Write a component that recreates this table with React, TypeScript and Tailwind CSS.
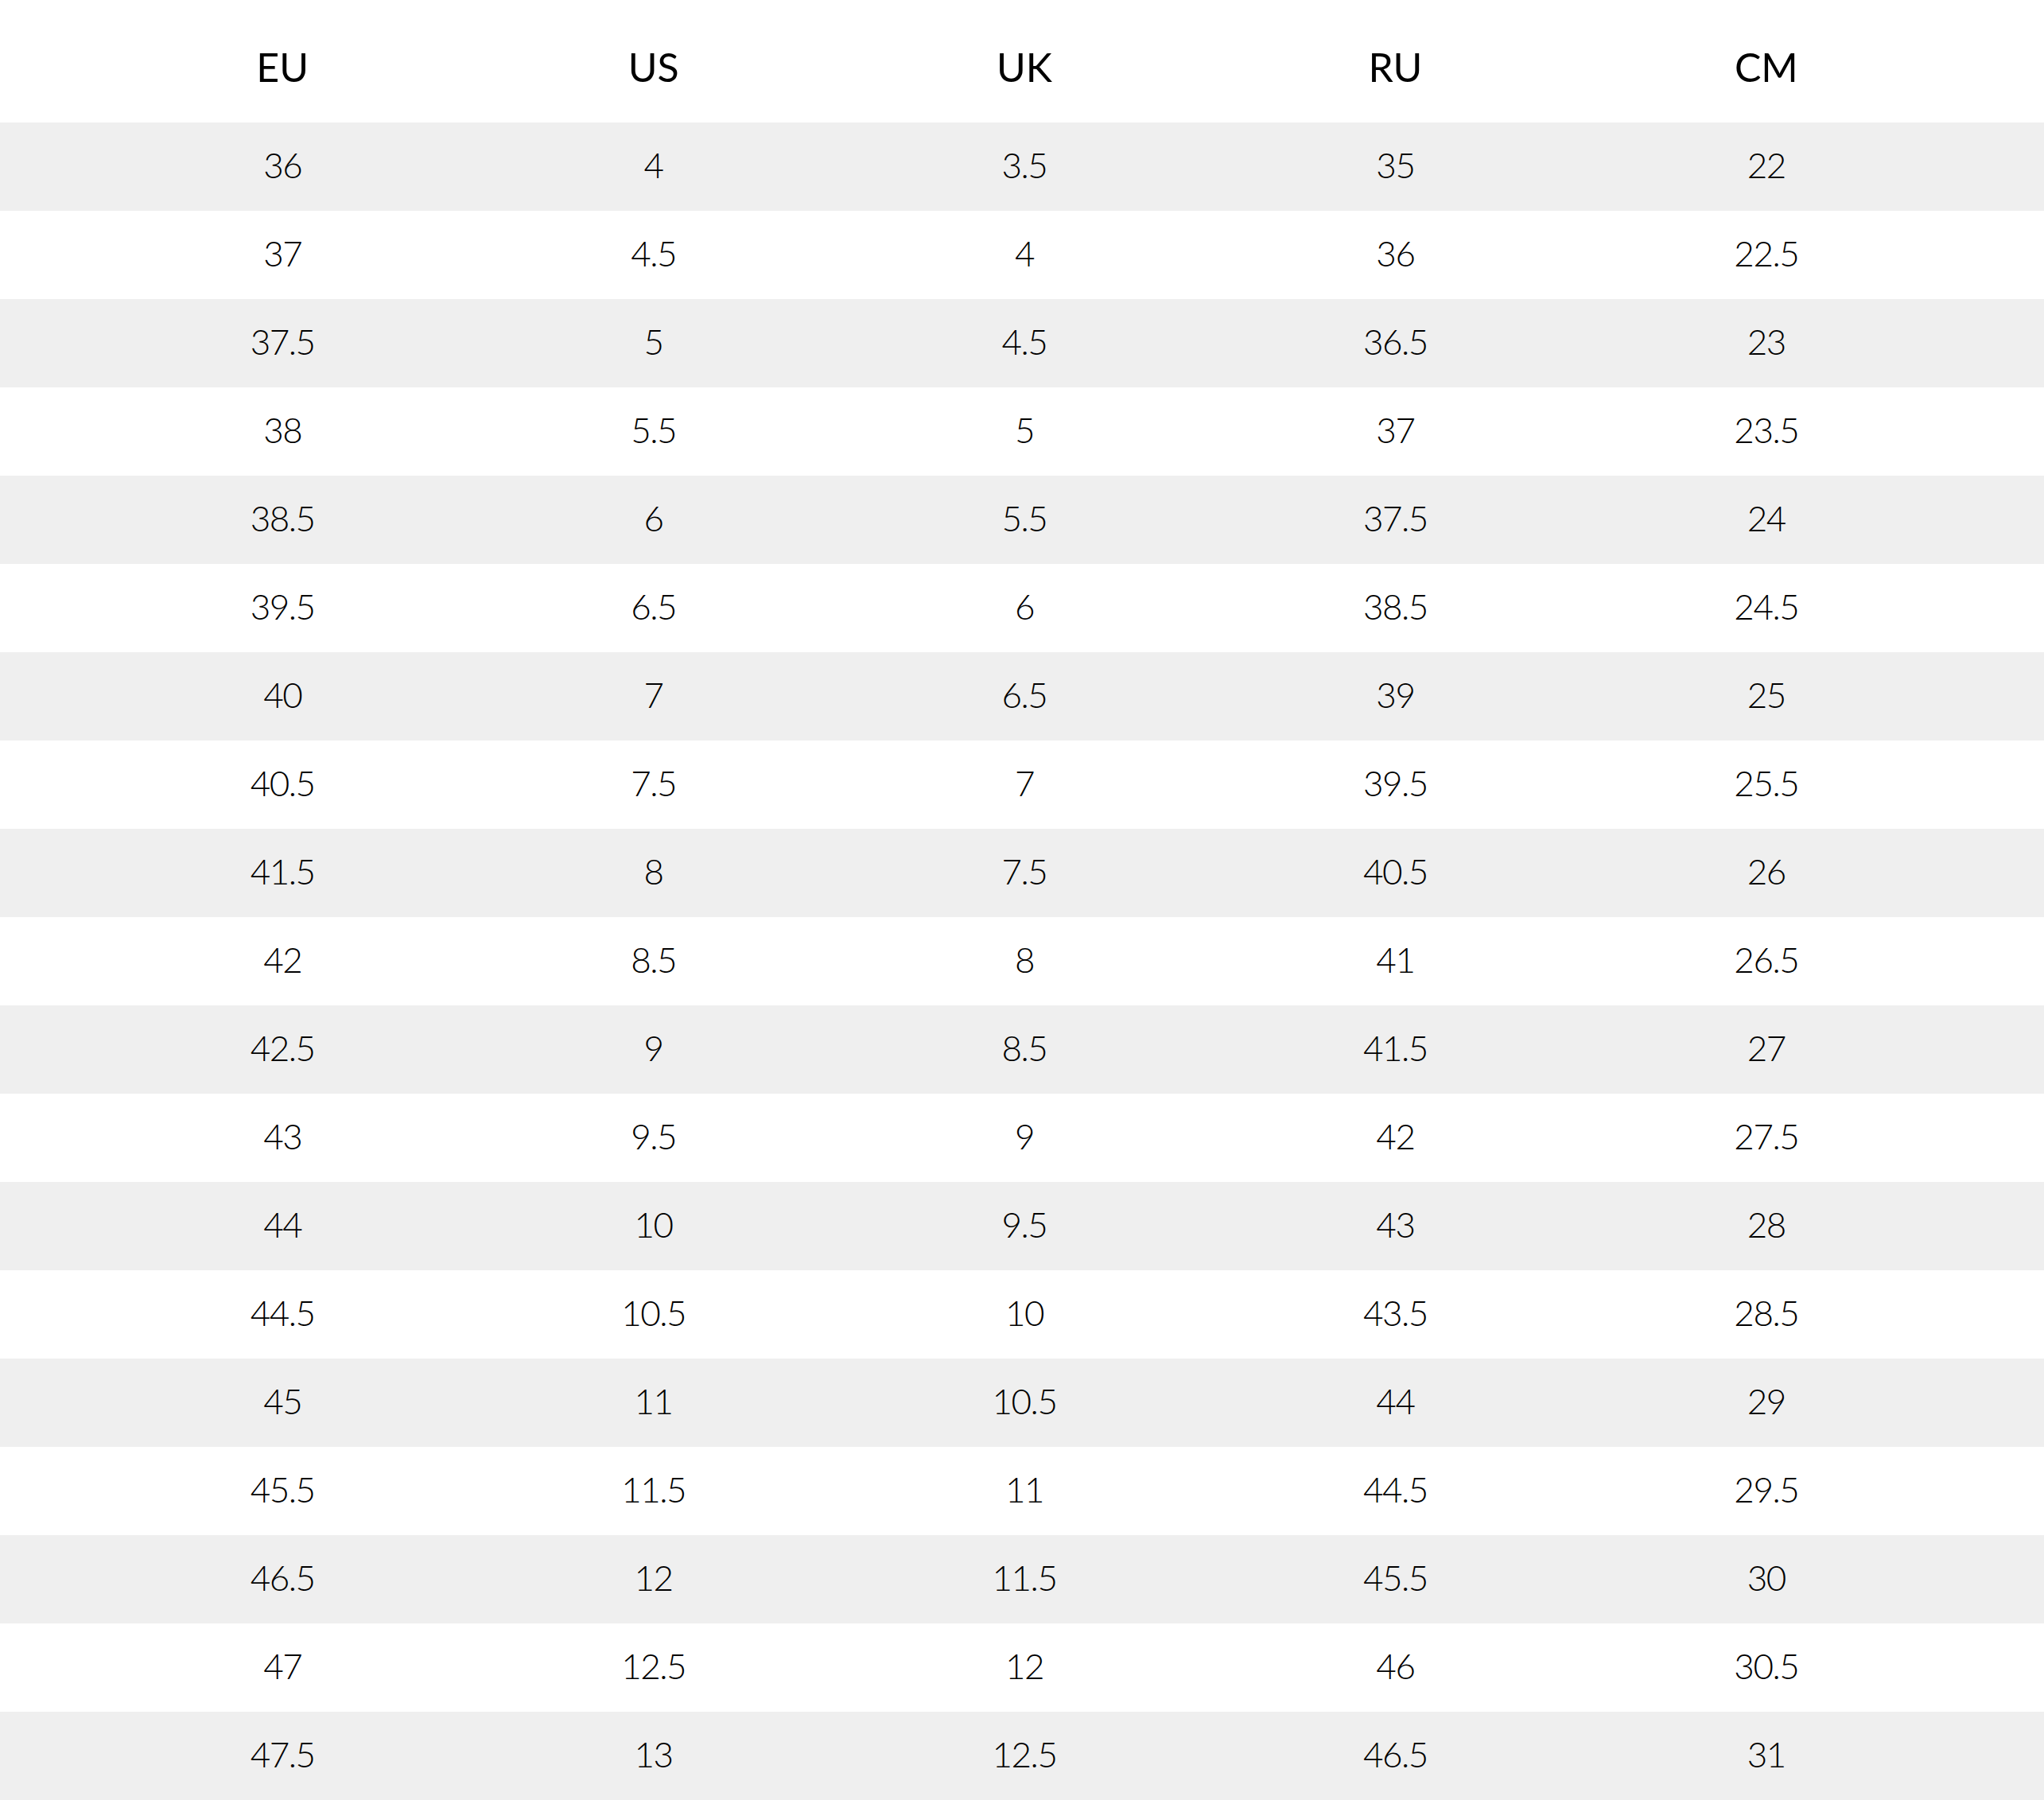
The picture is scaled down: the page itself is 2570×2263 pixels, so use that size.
const headers = ["EU", "US", "UK", "RU", "CM"];

const rows: string[][] = [
  ["36", "4", "3.5", "35", "22"],
  ["37", "4.5", "4", "36", "22.5"],
  ["37.5", "5", "4.5", "36.5", "23"],
  ["38", "5.5", "5", "37", "23.5"],
  ["38.5", "6", "5.5", "37.5", "24"],
  ["39.5", "6.5", "6", "38.5", "24.5"],
  ["40", "7", "6.5", "39", "25"],
  ["40.5", "7.5", "7", "39.5", "25.5"],
  ["41.5", "8", "7.5", "40.5", "26"],
  ["42", "8.5", "8", "41", "26.5"],
  ["42.5", "9", "8.5", "41.5", "27"],
  ["43", "9.5", "9", "42", "27.5"],
  ["44", "10", "9.5", "43", "28"],
  ["44.5", "10.5", "10", "43.5", "28.5"],
  ["45", "11", "10.5", "44", "29"],
  ["45.5", "11.5", "11", "44.5", "29.5"],
  ["46.5", "12", "11.5", "45.5", "30"],
  ["47", "12.5", "12", "46", "30.5"],
  ["47.5", "13", "12.5", "46.5", "31"],
];

export default function App() {
  return (
    <div className="w-[2570px] bg-white text-black font-['Lato',sans-serif]">
      <div className="grid grid-cols-5 pl-[122px] pr-[116px] h-[154px] items-center pt-[14px]">
        {headers.map((h) => (
          <div key={h} className="text-center text-[50px] font-normal leading-none">
            {h}
          </div>
        ))}
      </div>
      {rows.map((r, i) => (
        <div
          key={r[0]}
          className={`grid grid-cols-5 pl-[122px] pr-[116px] h-[111px] items-center pb-[6px] ${i % 2 === 0 ? "bg-[#efefef]" : "bg-white"}`}
        >
          {r.map((v, j) => (
            <div key={j} className="text-center text-[44px] font-light leading-none tracking-[-1.5px]">
              {v}
            </div>
          ))}
        </div>
      ))}
    </div>
  );
}
